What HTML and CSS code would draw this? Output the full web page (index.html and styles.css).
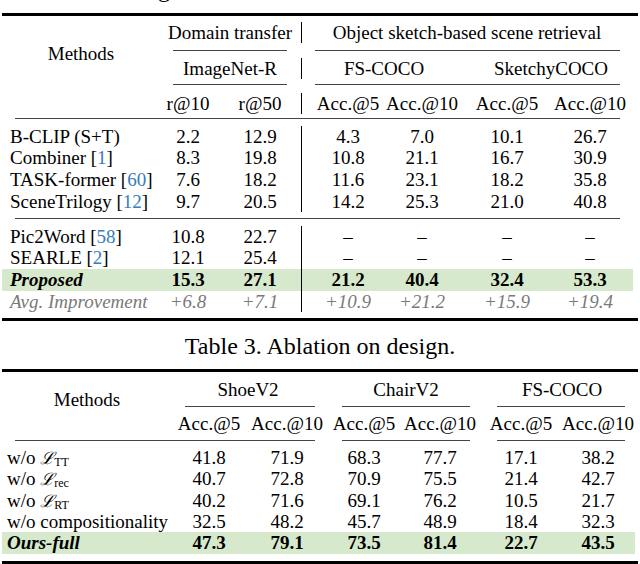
FILE: index.html
```html
<!DOCTYPE html>
<html>
<head>
<meta charset="utf-8">
<link rel="stylesheet" href="styles.css">
</head>
<body>
<div class="page">
  <p class="cap-top">based scene image retrieval.</p>

  <div class="t1">
    <div class="thick top1"></div>
    <div class="head">
      <div class="methods">Methods</div>
      <div class="hstack">
        <div class="hrow">
          <div class="c dt">Domain transfer</div>
          <div class="bar"></div>
          <div class="c obj">Object sketch-based scene retrieval</div>
        </div>
        <div class="hrow crow cr1">
          <div class="ln l-dt"></div>
          <div class="ln l-obj"></div>
        </div>
        <div class="hrow">
          <div class="c dt">ImageNet-R</div>
          <div class="bar"></div>
          <div class="c fs">FS-COCO</div>
          <div class="c sk">SketchyCOCO</div>
        </div>
      </div>
    </div>
    <div class="row crow cr2">
      <div class="ln l-dt"></div>
      <div class="ln l-obj"></div>
    </div>
    <div class="row">
      <div class="m"></div>
      <div class="c">r@10</div><div class="c">r@50</div><div class="bar"></div>
      <div class="c">Acc.@5</div><div class="c">Acc.@10</div><div class="c">Acc.@5</div><div class="c">Acc.@10</div>
    </div>
    <div class="mid mid1"></div>
    <div class="row">
      <div class="m">B-CLIP (S+T)</div>
      <div class="c">2.2</div><div class="c">12.9</div><div class="bar"></div>
      <div class="c">4.3</div><div class="c">7.0</div><div class="c">10.1</div><div class="c">26.7</div>
    </div>
    <div class="row">
      <div class="m">Combiner [<span class="cite">1</span>]</div>
      <div class="c">8.3</div><div class="c">19.8</div><div class="bar"></div>
      <div class="c">10.8</div><div class="c">21.1</div><div class="c">16.7</div><div class="c">30.9</div>
    </div>
    <div class="row">
      <div class="m">TASK-former [<span class="cite">60</span>]</div>
      <div class="c">7.6</div><div class="c">18.2</div><div class="bar"></div>
      <div class="c">11.6</div><div class="c">23.1</div><div class="c">18.2</div><div class="c">35.8</div>
    </div>
    <div class="row">
      <div class="m">SceneTrilogy [<span class="cite">12</span>]</div>
      <div class="c">9.7</div><div class="c">20.5</div><div class="bar"></div>
      <div class="c">14.2</div><div class="c">25.3</div><div class="c">21.0</div><div class="c">40.8</div>
    </div>
    <div class="mid mid2"></div>
    <div class="row">
      <div class="m">Pic2Word [<span class="cite">58</span>]</div>
      <div class="c">10.8</div><div class="c">22.7</div><div class="bar"></div>
      <div class="c">–</div><div class="c">–</div><div class="c">–</div><div class="c">–</div>
    </div>
    <div class="row">
      <div class="m">SEARLE [<span class="cite">2</span>]</div>
      <div class="c">12.1</div><div class="c">25.4</div><div class="bar"></div>
      <div class="c">–</div><div class="c">–</div><div class="c">–</div><div class="c">–</div>
    </div>
    <div class="row best best1">
      <div class="m bi">Proposed</div>
      <div class="c">15.3</div><div class="c">27.1</div><div class="bar"></div>
      <div class="c">21.2</div><div class="c">40.4</div><div class="c">32.4</div><div class="c">53.3</div>
    </div>
    <div class="row avg">
      <div class="m">Avg. Improvement</div>
      <div class="c">+6.8</div><div class="c">+7.1</div><div class="bar"></div>
      <div class="c">+10.9</div><div class="c">+21.2</div><div class="c">+15.9</div><div class="c">+19.4</div>
    </div>
    <div class="thick bot1"></div>
  </div>

  <p class="caption">Table 3. Ablation on design.</p>

  <div class="t2">
    <div class="thick top2"></div>
    <div class="head">
      <div class="methods">Methods</div>
      <div class="hstack">
        <div class="hrow">
          <div class="c g-shoe">ShoeV2</div>
          <div class="c g-chair">ChairV2</div>
          <div class="c g-fs">FS-COCO</div>
        </div>
        <div class="hrow crow cr1">
          <div class="ln l-shoe"></div>
          <div class="ln l-chair"></div>
          <div class="ln l-fs"></div>
        </div>
        <div class="hrow">
          <div class="c">Acc.@5</div><div class="c">Acc.@10</div>
          <div class="c">Acc.@5</div><div class="c">Acc.@10</div>
          <div class="c">Acc.@5</div><div class="c">Acc.@10</div>
        </div>
      </div>
    </div>
    <div class="row crow cr2">
      <div class="ln l-first"></div>
      <div class="ln l-chair"></div>
      <div class="ln l-fs"></div>
    </div>
    <div class="row">
      <div class="m">w/o <span class="cal">ℒ</span><span class="sub">TT</span></div>
      <div class="c">41.8</div><div class="c">71.9</div><div class="c">68.3</div><div class="c">77.7</div><div class="c">17.1</div><div class="c">38.2</div>
    </div>
    <div class="row">
      <div class="m">w/o <span class="cal">ℒ</span><span class="sub">rec</span></div>
      <div class="c">40.7</div><div class="c">72.8</div><div class="c">70.9</div><div class="c">75.5</div><div class="c">21.4</div><div class="c">42.7</div>
    </div>
    <div class="row">
      <div class="m">w/o <span class="cal">ℒ</span><span class="sub">RT</span></div>
      <div class="c">40.2</div><div class="c">71.6</div><div class="c">69.1</div><div class="c">76.2</div><div class="c">10.5</div><div class="c">21.7</div>
    </div>
    <div class="row">
      <div class="m">w/o compositionality</div>
      <div class="c">32.5</div><div class="c">48.2</div><div class="c">45.7</div><div class="c">48.9</div><div class="c">18.4</div><div class="c">32.3</div>
    </div>
    <div class="row best best2">
      <div class="m bi">Ours-full</div>
      <div class="c">47.3</div><div class="c">79.1</div><div class="c">73.5</div><div class="c">81.4</div><div class="c">22.7</div><div class="c">43.5</div>
    </div>
    <div class="thick bot2"></div>
  </div>
</div>
</body>
</html>
```

FILE: styles.css
```css
html, body {
  margin: 0;
  padding: 0;
  overflow: hidden;
  background: #fff;
}
body {
  width: 640px;
  font-family: "Liberation Serif", "Times New Roman", serif;
  font-size: 19px;
  color: #000;
}
.page {
  display: flow-root;
}
.cap-top {
  margin: -23px 0 0;
  padding-left: 2px;
  font-size: 24px;
  line-height: 24px;
}
.caption {
  margin: 13.4px 0 0;
  font-size: 24px;
  line-height: 24px;
  text-align: center;
}

/* rules */
.thick {
  height: 3px;
  background: #000;
  margin-left: 2px;
  margin-right: 2px;
}
.top1 { margin-top: 12px; margin-bottom: 5.7px; }
.bot1 { margin-top: 5.5px; }
.top2 { margin-top: 11.1px; margin-bottom: 7.2px; }
.bot2 { margin-top: 7.5px; }

.mid {
  height: 1px;
  background: #444;
  margin-left: 15px;
  margin-right: 20px;
}
.mid1 { margin-top: 3.6px; margin-bottom: 6.7px; }
.mid2 { margin-top: 5.5px; margin-bottom: 6.7px; }

.ln {
  height: 0;
  border-top: 1px solid #444;
}

/* grids */
.row, .hrow {
  display: grid;
  line-height: 21.7px;
  height: 21.7px;
}
.row.crow, .hrow.crow {
  line-height: 0;
  height: 1px;
}

.head {
  display: grid;
}
.methods {
  align-self: start;
  text-align: center;
  line-height: 21.7px;
}

.c {
  display: flex;
  justify-content: center;
  white-space: nowrap;
}
.m {
  white-space: nowrap;
}
.bar {
  width: 0;
  margin-left: 5px;
  border-left: 1px solid #000;
}
.cite { color: #367dbd; }
.bi { font-weight: bold; font-style: italic; }
.best { font-weight: bold; }
.avg { font-style: italic; color: #7a7a7a; }

/* ---------- table 1 ---------- */
.t1 .head { grid-template-columns: 152px 488px; }
.t1 .methods { padding-top: 21px; padding-left: 10px; }
.t1 .hrow { grid-template-columns: 72px 72px 14px 76px 72px 98px 68px 16px; }
.t1 .row { grid-template-columns: 152px 72px 72px 14px 76px 72px 98px 68px 16px; }
.t1 .m { padding-left: 10px; }

.t1 .hrow .dt { grid-column: 1 / 3; padding-left: 12px; }
.t1 .hrow .obj { grid-column: 4 / 8; }
.t1 .hrow .fs { grid-column: 4 / 6; }
.t1 .hrow .sk { grid-column: 6 / 8; padding-left: 20px; }

.t1 .cr1 { margin-top: 6.6px; margin-bottom: 6.7px; }
.t1 .cr1 .l-dt { grid-column: 1 / 3; margin-left: 21px; margin-right: 9px; }
.t1 .cr1 .l-obj { grid-column: 4 / 8; margin-left: 5px; margin-right: 4px; }
.t1 .cr2 { margin-top: 4.6px; margin-bottom: 7.7px; }
.t1 .cr2 .l-dt { grid-column: 2 / 4; margin-left: 21px; margin-right: 9px; }
.t1 .cr2 .l-obj { grid-column: 5 / 9; margin-left: 5px; margin-right: 4px; }

.best1 {
  background: linear-gradient(to right, transparent 2px, #d6e9cc 2px, #d6e9cc 633px, transparent 633px);
}

/* ---------- table 2 ---------- */
.t2 .head { grid-template-columns: 170px 470px; }
.t2 .methods { padding-top: 10px; padding-left: 4px; }
.t2 .hrow { grid-template-columns: 78px 78px 76px 76px 86px 68px 8px; }
.t2 .row { grid-template-columns: 170px 78px 78px 76px 76px 86px 68px 8px; line-height: 21.4px; height: 21.4px; }
.t2 .row.crow { line-height: 0; height: 1px; }
.t2 .m { padding-left: 7px; }

.t2 .g-shoe { grid-column: 1 / 3; }
.t2 .g-chair { grid-column: 3 / 5; padding-left: 8px; }
.t2 .g-fs { grid-column: 5 / 7; padding-left: 14px; }

.t2 .cr1 { margin-top: 4.6px; margin-bottom: 6.7px; }
.t2 .cr1 .l-shoe { grid-column: 1 / 3; margin-left: 15px; margin-right: 11px; }
.t2 .cr1 .l-chair { grid-column: 3 / 5; margin-left: 16px; margin-right: 8px; }
.t2 .cr1 .l-fs { grid-column: 5 / 7; margin-left: 19px; margin-right: 7px; }
.t2 .cr2 { margin-top: 4.6px; margin-bottom: 6.2px; }
.t2 .cr2 .l-first { grid-column: 1 / 4; margin-left: 15px; margin-right: 11px; }
.t2 .cr2 .l-chair { grid-column: 4 / 6; margin-left: 16px; margin-right: 8px; }
.t2 .cr2 .l-fs { grid-column: 6 / 8; margin-left: 19px; margin-right: 7px; }

.cal {
  font-family: "DejaVu Serif", serif;
  font-style: italic;
  font-size: 17px;
  line-height: 0;
}
.sub {
  font-size: 12px;
  line-height: 0;
  position: relative;
  top: 2px;
}

.best2 {
  background: linear-gradient(to right, transparent 2px, #d6e9cc 2px, #d6e9cc 635px, transparent 635px);
}
```
